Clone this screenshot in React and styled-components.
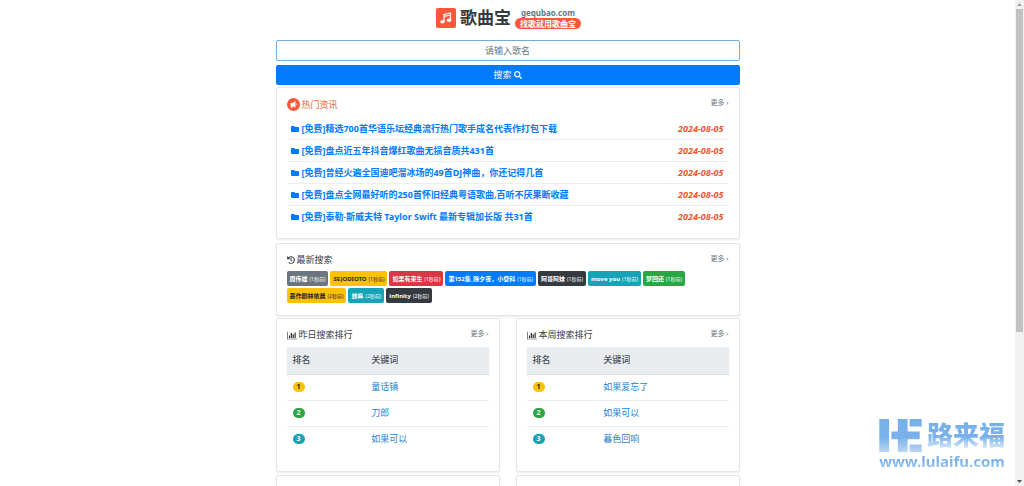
import React from "react";
import styled, { createGlobalStyle } from 'styled-components';
import { FaFolder, FaHistory, FaSearch } from 'react-icons/fa';


const GlobalStyle = createGlobalStyle`
    * {
        box-sizing: border-box;
    }
    body {
        margin: 0;
        background: #ffffff;
        color: #212529;
        font-family: "Noto Sans", "Noto Sans CJK SC", sans-serif;
        font-size: 9px;
        line-height: 12px;
    }
    a {
        text-decoration: none;
    }
`;

const Shell = styled.div`
    position: relative;
    display: flex;
    height: 100vh;
    overflow: hidden;
`;

const Page = styled.main`
    flex: 1;
    overflow: hidden;
    padding: 7px 16px 0;
`;

const Container = styled.div`
    display: flex;
    flex-direction: column;
    max-width: 464px;
    margin: 0 auto;
`;

const Brand = styled.a`
    display: flex;
    align-items: center;
    align-self: center;
    gap: 4px;
    height: 22px;
    margin-bottom: 11px;
    padding-left: 2px;
    color: #343a40;
`;

const BrandIcon = styled.span`
    display: flex;
    align-items: center;
    justify-content: center;
    width: 20px;
    height: 20px;
    border-radius: 2px;
    background: #fc573b;
    color: #ffffff;
`;

const BrandName = styled.span`
    font-size: 17px;
    font-weight: bold;
    line-height: 22px;
`;

const BrandSide = styled.span`
    display: flex;
    flex-direction: column;
    align-items: center;
    font-weight: bold;
`;

const BrandDomain = styled.span`
    color: #66788a;
    font-size: 8px;
    line-height: 10px;
`;

const BrandSlogan = styled.span`
    padding: 0 5px;
    border-radius: 6px;
    background: #fc573b;
    color: #ffffff;
    font-size: 8px;
    line-height: 11px;
`;

const SearchForm = styled.form`
    display: flex;
    flex-direction: column;
    gap: 4px;
    margin-bottom: 2px;
`;

const SearchInput = styled.input`
    width: 100%;
    height: 21px;
    border: 1px solid #6fabe0;
    border-radius: 2px;
    color: #495057;
    font: inherit;
    text-align: center;
    outline: none;
    &::placeholder {
        color: #6c757d;
        opacity: 1;
    }
`;

const SearchButton = styled.button`
    display: flex;
    align-items: center;
    justify-content: center;
    gap: 2px;
    width: 100%;
    height: 20px;
    border: 0;
    border-radius: 2px;
    background: #007bff;
    color: #ffffff;
    font: inherit;
`;

const Panel = styled.section`
    margin-bottom: ${props => props.$gap || 2}px;
    padding: 10px;
    border: 1px solid #e4e6e8;
    border-radius: 2px;
    box-shadow: 0 1px 2px rgba(0, 0, 0, 0.08);
    background: #ffffff;
`;

const PanelHeader = styled.header`
    display: flex;
    align-items: flex-start;
    justify-content: space-between;
    margin-bottom: 5px;
`;

const PanelTitle = styled.h2`
    display: flex;
    align-items: center;
    gap: 2px;
    margin: 0;
    color: ${props => props.$hot ? '#e8622c' : '#343a40'};
    font-size: 9px;
    font-weight: normal;
`;

const MoreLink = styled.a`
    color: #6c757d;
    font-size: 7px;
    line-height: 10px;
`;

const NewsList = styled.ul`
    margin: 0;
    padding: 2px 0 0;
    list-style: none;
`;

const NewsItem = styled.li`
    display: flex;
    align-items: center;
    justify-content: space-between;
    height: 22px;
    padding: 0 5px 0 4px;
    border-bottom: 1px solid #eceeef;
    font-weight: bold;
    &:last-child {
        border-bottom-color: transparent;
    }
`;

const NewsLink = styled.a`
    display: flex;
    align-items: center;
    gap: 3px;
    color: #007bff;
    white-space: nowrap;
`;

const NewsDate = styled.time`
    color: #f0562f;
    font-style: italic;
`;

const TagList = styled.div`
    display: flex;
    flex-wrap: wrap;
    gap: 2px;
    padding-bottom: 2px;
`;

const tagColors = {
    secondary: '#6c757d',
    warning: '#ffc107',
    danger: '#dc3545',
    primary: '#007bff',
    dark: '#343a40',
    info: '#17a2b8',
    success: '#28a745',
};

const Tag = styled.a`
    display: flex;
    align-items: center;
    gap: 2px;
    height: 15px;
    padding: 0 3px;
    border-radius: 2px;
    background: ${props => tagColors[props.$kind]};
    color: ${props => props.$kind === 'warning' ? '#212529' : '#ffffff'};
    font-size: 6px;
    font-weight: bold;
    white-space: nowrap;
`;

const TagTime = styled.small`
    font-size: 5px;
    font-weight: normal;
`;

const Columns = styled.div`
    display: grid;
    grid-template-columns: 1fr 1fr;
    column-gap: 16px;
`;

const RankTable = styled.table`
    width: 100%;
    margin: 6px 0 9px;
    border-collapse: collapse;
    table-layout: fixed;
`;

const HeadCell = styled.th`
    width: ${props => props.$width || 'auto'};
    height: 27px;
    padding: 0 6px;
    border-bottom: 1px solid #dee2e6;
    background: #e9ecef;
    color: #495057;
    font-weight: 500;
    text-align: left;
`;

const Cell = styled.td`
    height: 26px;
    padding: 0 6px;
    tr + tr > & {
        border-top: 1px solid #e9ecef;
    }
`;

const RankBadge = styled.span`
    display: block;
    width: 12px;
    border-radius: 5px;
    background: ${props => tagColors[props.$kind]};
    color: ${props => props.$kind === 'warning' ? '#212529' : '#ffffff'};
    font-size: 7px;
    font-weight: bold;
    line-height: 10px;
    text-align: center;
`;

const SongLink = styled.a`
    color: #2a83d0;
`;

const ScrollTrack = styled.div`
    display: flex;
    flex-direction: column;
    align-items: center;
    width: 9px;
    background: #f1f1f1;
`;

const ScrollArrow = styled.svg`
    display: block;
    width: 9px;
    height: 9px;
    fill: ${props => props.$active ? '#505050' : '#a3a3a3'};
`;

const ScrollRail = styled.div`
    flex: 1;
    width: 7px;
`;

const ScrollThumb = styled.div`
    height: 69%;
    background: #c1c1c1;
`;

const Watermark = styled.div`
    position: absolute;
    right: 19px;
    bottom: 16px;
    display: flex;
    flex-direction: column;
    font-weight: bold;
`;

const WatermarkTop = styled.div`
    display: flex;
    align-items: center;
    justify-content: space-between;
    height: 34px;
`;

const WatermarkName = styled.span`
    background: linear-gradient(#78b0ea 55%, #d3e5f8 90%);
    background-clip: text;
    color: transparent;
    font-size: 26px;
    font-weight: 900;
    line-height: 32px;
`;

const WatermarkUrl = styled.span`
    background: linear-gradient(#78b0ea 50%, #a9cdf2);
    background-clip: text;
    color: transparent;
    font-size: 15px;
    line-height: 18px;
`;

const news = [
    { title: '[免费]精选700首华语乐坛经典流行热门歌手成名代表作打包下载', date: '2024-08-05' },
    { title: '[免费]盘点近五年抖音爆红歌曲无损音质共431首', date: '2024-08-05' },
    { title: '[免费]曾经火遍全国迪吧溜冰场的49首DJ神曲，你还记得几首', date: '2024-08-05' },
    { title: '[免费]盘点全网最好听的250首怀旧经典粤语歌曲,百听不厌果断收藏', date: '2024-08-05' },
    { title: '[免费]泰勒·斯威夫特 Taylor Swift 最新专辑加长版 共31首', date: '2024-08-05' },
];

const searches = [
    { name: '周传雄', time: '1秒前', kind: 'secondary' },
    { name: 'SEJODIOTO', time: '1秒前', kind: 'warning' },
    { name: '如果有来生', time: '1秒前', kind: 'danger' },
    { name: '第152集_除夕夜，小登科', time: '1秒前', kind: 'primary' },
    { name: '阿哥阿妹', time: '1秒前', kind: 'dark' },
    { name: 'move you', time: '1秒前', kind: 'info' },
    { name: '梦回还', time: '1秒前', kind: 'success' },
    { name: '恶作剧林依晨', time: '2秒前', kind: 'warning' },
    { name: '放纵', time: '2秒前', kind: 'info' },
    { name: 'infinity', time: '2秒前', kind: 'dark' },
];

const yesterday = ['童话镇', '刀郎', '如果可以'];
const week = ['如果爱忘了', '如果可以', '暮色回响'];
const rankKinds = ['warning', 'success', 'info'];

const NoteIcon = () => (
    <svg width="12" height="12" viewBox="0 0 24 24" aria-hidden="true">
        <path fill="none" stroke="currentColor" strokeWidth="2.500" d="M8 19V5l13-3v14M8 9l13-3" />
        <ellipse cx="5" cy="19.500" rx="4.500" ry="3.500" fill="currentColor" />
        <ellipse cx="18" cy="16.500" rx="4.500" ry="3.500" fill="currentColor" />
    </svg>
);

const HotIcon = () => (
    <svg width="13" height="13" viewBox="0 0 26 26" aria-hidden="true">
        <circle cx="13" cy="13" r="13" fill="#fc573b" />
        <path fill="#ffffff" d="M7 10h4l6-4v13l-6-3v4H8v-4H7zM18 10q3 2.500 0 5z" />
    </svg>
);

const ChartIcon = () => (
    <svg width="10" height="9" viewBox="0 0 2048 1792" fill="currentColor" aria-hidden="true">
        <path d="M640 896v512h-256v-512h256zM1024 384v1024h-256v-1024h256zM2048 1536v128h-2048v-1536h128v1408h1920zM1408 640v768h-256v-768h256zM1792 256v1152h-256v-1152h256z" />
    </svg>
);

const HeLogo = () => (
    <svg width="43" height="33" viewBox="0 0 126 98" aria-hidden="true">
        <defs>
            <linearGradient id="he-fade" gradientUnits="userSpaceOnUse" x1="0" y1="0" x2="0" y2="98">
                <stop offset="0.55" stopColor="#78b0ea" />
                <stop offset="1" stopColor="#b9d6f5" />
            </linearGradient>
        </defs>
        <path fill="url(#he-fade)" d="M0 0h29v98H0zM55 0h29v37h36v23H84v38H55V60H36V37h19zM90 0h36v22H90zM90 76h36v22H90z" />
    </svg>
);

const Ranking = (props) => {
    return (
        <Panel $gap={3}>
            <PanelHeader>
                <PanelTitle><ChartIcon />{props.title}</PanelTitle>
                <MoreLink href="#">更多 ›</MoreLink>
            </PanelHeader>
            <RankTable>
                <thead>
                    <tr>
                        <HeadCell $width={props.rankWidth}>排名</HeadCell>
                        <HeadCell>关键词</HeadCell>
                    </tr>
                </thead>
                <tbody>
                    {props.songs.map((song, index) =>
                    <tr key={song}>
                        <Cell><RankBadge $kind={rankKinds[index]}>{index + 1}</RankBadge></Cell>
                        <Cell><SongLink href="#">{song}</SongLink></Cell>
                    </tr>
                    )}
                </tbody>
            </RankTable>
        </Panel>
    );
};

const App = () => {
    return (
        <Shell>
            <GlobalStyle />
            <Page>
                <Container>
                    <Brand href="#">
                        <BrandIcon><NoteIcon /></BrandIcon>
                        <BrandName>歌曲宝</BrandName>
                        <BrandSide>
                            <BrandDomain>gequbao.com</BrandDomain>
                            <BrandSlogan>找歌就用歌曲宝</BrandSlogan>
                        </BrandSide>
                    </Brand>
                    <SearchForm onSubmit={(e) => e.preventDefault()}>
                        <SearchInput type="text" placeholder="请输入歌名" aria-label="请输入歌名" />
                        <SearchButton type="submit">搜索 <FaSearch size={8} /></SearchButton>
                    </SearchForm>
                    <Panel $gap={4}>
                        <PanelHeader>
                            <PanelTitle $hot><HotIcon />热门资讯</PanelTitle>
                            <MoreLink href="#">更多 ›</MoreLink>
                        </PanelHeader>
                        <NewsList>
                            {news.map(item =>
                            <NewsItem key={item.title}>
                                <NewsLink href="#"><FaFolder size={8} />{item.title}</NewsLink>
                                <NewsDate>{item.date}</NewsDate>
                            </NewsItem>
                            )}
                        </NewsList>
                    </Panel>
                    <Panel>
                        <PanelHeader>
                            <PanelTitle><FaHistory size={8} />最新搜索</PanelTitle>
                            <MoreLink href="#">更多 ›</MoreLink>
                        </PanelHeader>
                        <TagList>
                            {searches.map(item =>
                            <Tag href="#" key={item.name} $kind={item.kind}>
                                {item.name} <TagTime>({item.time})</TagTime>
                            </Tag>
                            )}
                        </TagList>
                    </Panel>
                    <Columns>
                        <Ranking title="昨日搜索排行" songs={yesterday} rankWidth="39%" />
                        <Ranking title="本周搜索排行" songs={week} rankWidth="35%" />
                        <Panel />
                        <Panel />
                    </Columns>
                </Container>
            </Page>
            <ScrollTrack aria-hidden="true">
                <ScrollArrow viewBox="0 0 9 9"><path d="M2 6h5L4.500 3z" /></ScrollArrow>
                <ScrollRail><ScrollThumb /></ScrollRail>
                <ScrollArrow $active viewBox="0 0 9 9"><path d="M2 3h5L4.500 6z" /></ScrollArrow>
            </ScrollTrack>
            <Watermark>
                <WatermarkTop>
                    <HeLogo />
                    <WatermarkName>路来福</WatermarkName>
                </WatermarkTop>
                <WatermarkUrl>www.lulaifu.com</WatermarkUrl>
            </Watermark>
        </Shell>
    );
};

export default App;
